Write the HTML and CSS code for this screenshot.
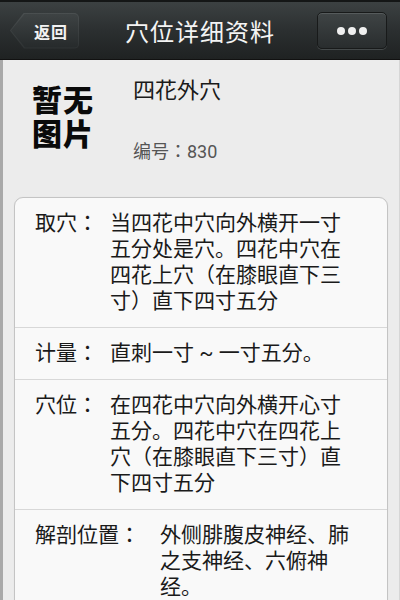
FILE: index.html
```html
<!DOCTYPE html>
<html lang="zh-CN">
<head>
<meta charset="utf-8">
<link rel="stylesheet" href="styles.css">
</head>
<body>
<div class="app">
  <header class="bar">
    <div class="back"><span>返回</span></div>
    <h1 class="title">穴位详细资料</h1>
    <div class="more"><i></i><i></i><i></i></div>
  </header>
  <main class="content">
    <section class="summary">
      <div class="noimg">暂无<br>图片</div>
      <div class="meta">
        <div class="name">四花外穴</div>
        <div class="num">编号：830</div>
      </div>
    </section>
    <section class="card">
      <div class="row">
        <div class="label">取穴：</div>
        <div class="text">当四花中穴向外横开一寸五分处是穴。四花中穴在四花上穴（在膝眼直下三寸）直下四寸五分</div>
      </div>
      <div class="row">
        <div class="label">计量：</div>
        <div class="text">直刺一寸 ~ 一寸五分。</div>
      </div>
      <div class="row">
        <div class="label">穴位：</div>
        <div class="text">在四花中穴向外横开心寸五分。四花中穴在四花上穴（在膝眼直下三寸）直下四寸五分</div>
      </div>
      <div class="row">
        <div class="label wide">解剖位置：</div>
        <div class="text">外侧腓腹皮神经、肺之支神经、六俯神经。</div>
      </div>
    </section>
  </main>
</div>
</body>
</html>
```
FILE: styles.css
```css
* { box-sizing: border-box; margin: 0; padding: 0; }
html, body { width: 400px; height: 600px; overflow: hidden; }
body {
  font-family: Roboto, "Noto Sans CJK JP", "Noto Sans CJK SC", sans-serif;
  font-feature-settings: "locl" 0;
  background: #ececec;
}
.app { width: 400px; height: 600px; display: flex; flex-direction: column; }
.bar {
  height: 60px;
  flex: none;
  display: flex;
  align-items: center;
  justify-content: space-between;
  padding: 0 13px 0 10px;
  background: linear-gradient(#3c4142, #2b2f30 50%, #1f2222);
  border-top: 2px solid #141616;
  border-bottom: 1px solid #111;
  position: relative;
}
.back {
  width: 69px;
  height: 36px;
  position: relative;
  display: flex;
  align-items: center;
  justify-content: flex-end;
  padding-right: 11px;
  background: linear-gradient(#4a4f50, #2e3233);
  clip-path: polygon(0 50%, 14px 0, 100% 0, 100% 100%, 14px 100%);
  border-radius: 0 5px 5px 0;
}
.back::before {
  content: "";
  position: absolute;
  inset: 1px 1px 1px 1px;
  clip-path: polygon(0 50%, 14px 0, 100% 0, 100% 100%, 14px 100%);
  background: linear-gradient(#3e4344, #262a2b);
  border-radius: 0 4px 4px 0;
}
.back span {
  position: relative;
  color: #f2f2f2;
  font-size: 16px;
  font-weight: bold;
  letter-spacing: 1px;
}
.title {
  position: absolute;
  left: 0; right: 0;
  text-align: center;
  color: #f4f4f4;
  font-size: 24px;
  font-weight: normal;
  letter-spacing: 1px;
  pointer-events: none;
}
.more {
  width: 70px;
  height: 37px;
  border-radius: 5px;
  border: 1px solid #181a1a;
  background: linear-gradient(#3f4445, #292d2e);
  box-shadow: inset 0 1px 0 #565b5c, 0 1px 0 #454a4b;
  display: flex;
  align-items: center;
  justify-content: center;
  gap: 3px;
}
.more i {
  width: 8px; height: 8px;
  border-radius: 50%;
  background: #f0f0f0;
}
.content {
  flex: 1;
  border-left: 3px solid #a9a9a9;
  border-right: 1px solid #d6d6d6;
  padding: 17px 12px 0 11px;
  overflow: hidden;
}
.summary {
  display: flex;
  height: 120px;
}
.noimg {
  width: 119px;
  padding: 7px 0 0 18px;
  font-size: 30px;
  font-weight: 900;
  line-height: 34px;
  color: #0a0a0a;
  letter-spacing: 1px;
}
.meta { display: flex; flex-direction: column; }
.name {
  font-size: 22px;
  line-height: 28px;
  color: #1a1a1a;
}
.num {
  margin-top: 35px;
  font-size: 18px;
  line-height: 24px;
  color: #555;
}
.card {
  background: #f9f9f9;
  border: 1px solid #c4c4c4;
  border-radius: 9px;
  width: 374px;
  box-shadow: 0 0 1px #ddd;
}
.row {
  display: flex;
  gap: 12px;
  padding: 12px 30px 13px 20px;
  border-bottom: 1px solid #d8d8d8;
  font-size: 21px;
  line-height: 26px;
  color: #1a1a1a;
}
.row:last-child { border-bottom: none; }
.label { flex: none; }
.label.wide { margin-right: 8px; }
.text { flex: 1; }
```
